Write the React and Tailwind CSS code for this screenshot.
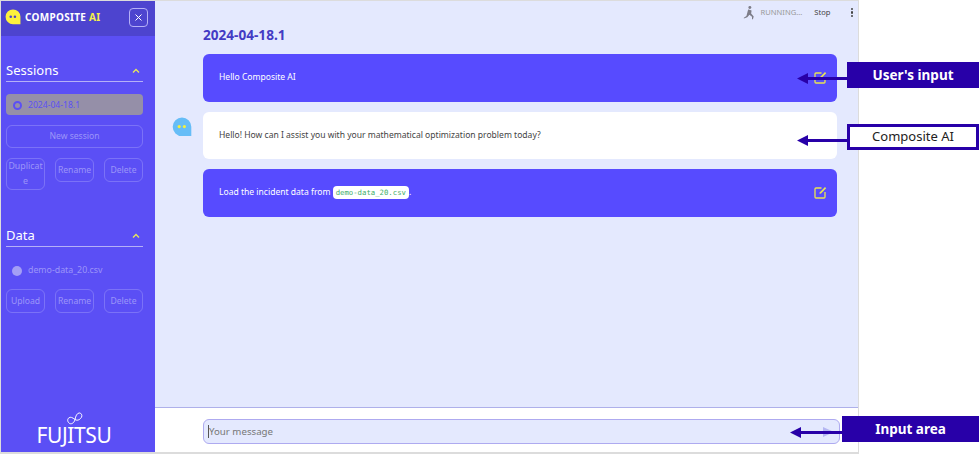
import React from 'react';

const font = { fontFamily: '"Noto Sans", "Noto Sans CJK JP", sans-serif' };

function BotIcon({ size = 20, body = '#fdf23c', eyes = '#4b44c8' }) {
  return (
    <svg width={size} height={size} viewBox="0 0 20 20">
      <path d="M10 0.5a9.3 9.3 0 0 0-9.3 9.3a9.3 9.3 0 0 0 9.3 9.3h9.3V9.8A9.3 9.3 0 0 0 10 0.5z" fill={body} />
      <circle cx="7.2" cy="9.6" r="1.6" fill={eyes} />
      <circle cx="12.4" cy="9.6" r="1.6" fill={eyes} />
    </svg>
  );
}

function Chevron() {
  return (
    <svg width="8" height="6" viewBox="0 0 8 6" fill="none" stroke="#e8e85a" strokeWidth="1.3">
      <path d="M1 4.5 L4 1.5 L7 4.5" />
    </svg>
  );
}

function EditIcon() {
  return (
    <svg width="13" height="13" viewBox="0 0 13 13" fill="none" stroke="#e9e552" strokeWidth="1.3">
      <path d="M7.5 2H2a1 1 0 0 0-1 1v8a1 1 0 0 0 1 1h8a1 1 0 0 0 1-1V6" />
      <path d="M5.5 8l.4-1.8L11 1l1.2 1.2L7 7.5z" fill="#e9e552" stroke="none" />
    </svg>
  );
}

function SideButton({ children, className = '' }) {
  return (
    <button className={`border border-white/20 rounded-md text-[8.6px] text-white/40 h-6 ${className}`}>
      {children}
    </button>
  );
}

function SectionTitle({ children }) {
  return (
    <div className="flex items-center justify-between h-[27px] pt-[5px] border-b border-[#b5b0f7] pr-[3px]">
      <span className="text-[13px] text-white">{children}</span>
      <Chevron />
    </div>
  );
}

function Sidebar() {
  return (
    <aside className="w-[154px] bg-[#5b4ff5] flex flex-col shrink-0">
      <div className="h-[35px] bg-[#4d44cf] flex items-center pl-[4px] pr-[7px] pb-[3px] justify-between">
        <div className="flex items-center gap-1">
          <BotIcon size={16} />
          <span className="text-[10px] font-bold text-white tracking-[0.3px]">
            COMPOSITE <span className="text-[#f5f04a]">AI</span>
          </span>
        </div>
        <button className="w-[19px] h-[19px] border border-[#b5b0f7] rounded text-white flex items-center justify-center">
          <svg width="9" height="9" viewBox="0 0 9 9" stroke="white" strokeWidth="1">
            <path d="M1.5 1.5L7.5 7.5M7.5 1.5L1.5 7.5" />
          </svg>
        </button>
      </div>
      <div className="pl-[5px] pr-[12px] pt-[19px]">
        <SectionTitle>Sessions</SectionTitle>
        <div className="mt-[12px] h-[21px] bg-[#958fa8] rounded-sm flex items-center pl-[7px] pt-px gap-[6px]">
          <span className="w-[9px] h-[9px] rounded-full border-[2.5px] border-[#5b4ff5]" />
          <span className="text-[8.6px] text-[#5b4ff5]">2024-04-18.1</span>
        </div>
        <SideButton className="w-full mt-[10px] h-[23px]">New session</SideButton>
        <div className="grid grid-cols-3 gap-[10px] mt-[10px] items-start">
          <button className="border border-white/20 rounded-md text-[8.8px] text-white/40 leading-[15px] h-[32px] break-all">
            Duplicate
          </button>
          <SideButton>Rename</SideButton>
          <SideButton>Delete</SideButton>
        </div>
        <div className="mt-[30px]">
          <SectionTitle>Data</SectionTitle>
        </div>
        <div className="flex items-center h-[21px] mt-[13px] pl-[6px] gap-[6px]">
          <span className="w-[10px] h-[10px] rounded-full bg-[#a49ef5]" />
          <span className="text-[8.8px] text-white/40">demo-data_20.csv</span>
        </div>
        <div className="grid grid-cols-3 gap-[10px] mt-[8px]">
          <SideButton>Upload</SideButton>
          <SideButton>Rename</SideButton>
          <SideButton>Delete</SideButton>
        </div>
      </div>
      <div className="mt-auto flex flex-col items-center pb-[4px] pr-[8px]">
        <svg width="18" height="13" viewBox="0 0 16 11" fill="none" stroke="white" strokeWidth="0.8" className="ml-[1px] -mb-[3px] -rotate-[20deg]">
          <path d="M8 5.5C6.5 3 5 1.8 3.6 2.2C1.5 2.7 1 5 2 6.8C3 8.5 6 8.5 8 5.5C9.5 3 11.5 .8 13.5 1.3C15.2 1.8 15.5 4.2 14.3 5.4C13 6.7 9.8 8 8 5.5Z" />
        </svg>
        <span className="text-[21px] leading-[25px] text-white tracking-[-0.4px]">FUJITSU</span>
      </div>
    </aside>
  );
}

function Message({ user, children, edit }) {
  return (
    <div
      className={`h-[47.5px] rounded-md flex items-center justify-between pl-4 pr-[10px] text-[8.55px] ${
        user ? 'bg-[#574bff] text-white' : 'bg-white text-[#444]'
      }`}
    >
      <span>{children}</span>
      {edit && <EditIcon />}
    </div>
  );
}

function Callout({ label, className, dark, arrowWidth }) {
  return (
    <div className={`absolute flex items-start ${className}`}>
      <svg width={arrowWidth} height="11" viewBox={`0 0 ${arrowWidth} 11`} className="shrink-0 mt-[11px]">
        <path d={`M0 5.5 L11 0 V4 H${arrowWidth} V7 H11 V11 Z`} fill="#2800a8" />
      </svg>
      <div
        className={`flex-1 h-[26px] flex items-center justify-center ${
          dark ? 'bg-[#2800a8] text-white font-bold text-[13.5px]' : 'bg-white border-[3px] border-[#2800a8] text-[#222] text-[13px]'
        }`}
      >
        {label}
      </div>
    </div>
  );
}

export default function App() {
  return (
    <div className="w-[979px] h-[454px] bg-white relative overflow-hidden" style={font}>
      <div className="flex w-[859px] h-[454px] border border-[#dcdcdc] border-b-2">
        <Sidebar />
        <main className="flex-1 flex flex-col min-w-0">
          <div className="flex-1 bg-[#e4e9fe] border-b border-[#aeb0ea] relative">
            <div className="absolute top-0 right-0 h-[23px] flex items-center pr-[5px]">
              <svg width="12" height="16" viewBox="0 0 14 17" fill="#7d7d88" className="mr-[6px]">
                <circle cx="8" cy="2" r="1.7" />
                <path d="M6.5 4.5L10 5.5L9.5 9L12.5 12.5L11.5 16L10.5 15.5L10.5 13L7.5 10.5L5 13.5L1 15L1 14L4 12L6 4.5Z" />
              </svg>
              <span className="text-[7.6px] text-[#999]">RUNNING...</span>
              <span className="text-[7.6px] text-[#444] ml-[12px]">Stop</span>
              <span className="ml-[20px] flex flex-col gap-[1px]">
                <span className="w-[2.5px] h-[2.5px] rounded-full bg-[#444]" />
                <span className="w-[2.5px] h-[2.5px] rounded-full bg-[#444]" />
                <span className="w-[2.5px] h-[2.5px] rounded-full bg-[#444]" />
              </span>
            </div>
            <div className="pl-[48px] pr-[21px] pt-[24px]">
              <h1 className="text-[13.6px] leading-[20px] font-bold text-[#433bc4]">2024-04-18.1</h1>
              <div className="mt-[9px] flex flex-col gap-[10px]">
                <Message user edit>Hello Composite AI</Message>
                <div className="relative">
                  <div className="absolute -left-[31px] top-[5px]">
                    <BotIcon size={20} body="#66bdf7" eyes="#f4f03c" />
                  </div>
                  <Message>Hello! How can I assist you with your mathematical optimization problem today?</Message>
                </div>
                <Message user edit>
                  Load the incident data from{' '}
                  <code className="bg-white text-[#3fae6a] rounded-sm px-[3px] py-[2px] text-[7.3px]" style={{ fontFamily: '"DejaVu Sans Mono", monospace' }}>
                    demo-data_20.csv
                  </code>
                  .
                </Message>
              </div>
            </div>
          </div>
          <div className="h-[44px] bg-white pl-[48px] pr-[18px] pt-[11px] shrink-0">
            <div className="h-[25px] border border-[#aeaaf0] rounded-md bg-[#e4e9fe] flex items-center pl-[4px] pr-[5px] justify-between">
              <span className="text-[9.7px] text-[#777] border-l border-[#555] leading-[13px]">Your message</span>
              <svg width="11" height="10" viewBox="0 0 11 10"><path d="M0 0L11 5L0 10Z" fill="#b4b6f2" /></svg>
            </div>
          </div>
        </main>
      </div>

      <Callout label="User's input" dark className="left-[797px] top-[62px] w-[182px]" arrowWidth={50} />
      <Callout label="Composite AI" className="left-[797px] top-[124px] w-[182px]" arrowWidth={50} />
      <Callout label="Input area" dark className="left-[790px] top-[416px] w-[189px]" arrowWidth={52} />
    </div>
  );
}
